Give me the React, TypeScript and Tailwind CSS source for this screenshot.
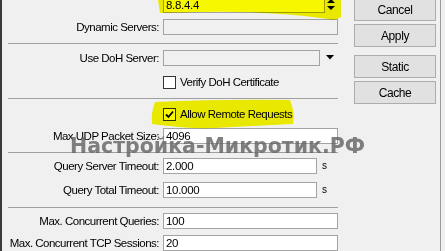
import React from "react";

function Label({ text }: { text: string }) {
  return (
    <div className="w-[158px] shrink-0 pr-[1px] text-right text-[11.5px] leading-[16px] tracking-[-0.5px] whitespace-nowrap">
      {text}
    </div>
  );
}

function Field({ w, value, bg }: { w: string; value?: string; bg: string }) {
  return (
    <div
      className={`ml-[3px] h-[16px] shrink-0 border border-[#a3a3a3] pl-[2px] text-[11.5px] leading-[14px] tracking-[-0.3px] ${w} ${bg}`}
    >
      {value}
    </div>
  );
}

function Sep({ mt }: { mt: string }) {
  return <div className={`ml-[6px] h-px w-[330px] bg-[#a0a0a0] ${mt}`} />;
}

function Check({ text, checked, mt }: { text: string; checked?: boolean; mt: string }) {
  return (
    <div className={`flex h-[13px] items-center pl-[161px] ${mt}`}>
      <div className="flex h-[13px] w-[13px] items-center justify-center border border-[#333333] bg-white">
        {checked && (
          <svg width="9" height="9" viewBox="0 0 9 9">
            <path d="M1 4.5 L3.5 7 L8 1.5" stroke="#000" strokeWidth="1.8" fill="none" />
          </svg>
        )}
      </div>
      <span className="ml-[4px] text-[11.5px] leading-[13px] tracking-[-0.5px] whitespace-nowrap">{text}</span>
    </div>
  );
}

function Btn({ text, mt }: { text: string; mt: string }) {
  return (
    <div
      className={`flex h-[23px] w-[82px] items-center justify-center border border-[#adadad] bg-[#e1e1e1] text-[12px] tracking-[-0.4px] ${mt}`}
    >
      {text}
    </div>
  );
}

export default function App() {
  return (
    <div className="relative flex h-[251px] w-[445px] overflow-hidden bg-[#f0f0f0] font-['Liberation_Sans',Arial,sans-serif] text-black">
      <div className="h-full w-[2px] shrink-0 bg-[#3a3a3a]" />
      <div className="flex w-[352px] shrink-0 flex-col">
        <div className="mt-[-3px] flex h-[16px] items-center">
          <Label text="" />
          <Field w="w-[162px]" value="8.8.4.4" bg="bg-white" />
          <svg className="ml-[2px]" width="8" height="12" viewBox="0 0 8 12">
            <path d="M0 4 L4 0 L8 4 Z M0 7 L8 7 L4 11 Z" fill="#000" />
          </svg>
        </div>
        <div className="mt-[6px] flex h-[16px] items-center">
          <Label text="Dynamic Servers:" />
          <Field w="w-[175px]" bg="bg-[#f0f0f0]" />
        </div>
        <Sep mt="mt-[8px]" />
        <div className="mt-[6px] flex h-[16px] items-center">
          <Label text="Use DoH Server:" />
          <Field w="w-[157px]" bg="bg-[#f0f0f0]" />
          <svg className="ml-[6px]" width="8" height="5" viewBox="0 0 8 5">
            <path d="M0 0 L8 0 L4 4.5 Z" fill="#000" />
          </svg>
        </div>
        <Check text="Verify DoH Certificate" mt="mt-[10px]" />
        <Sep mt="mt-[9px]" />
        <Check text="Allow Remote Requests" checked mt="mt-[10px]" />
        <div className="mt-[7px] flex h-[16px] items-center">
          <Label text="Max UDP Packet Size:" />
          <Field w="w-[175px]" value="4096" bg="bg-white" />
        </div>
        <Sep mt="mt-[8px]" />
        <div className="mt-[5px] flex h-[16px] items-center">
          <Label text="Query Server Timeout:" />
          <Field w="w-[154px]" value="2.000" bg="bg-white" />
          <span className="ml-[5px] text-[10px]">s</span>
        </div>
        <div className="mt-[8px] flex h-[16px] items-center">
          <Label text="Query Total Timeout:" />
          <Field w="w-[154px]" value="10.000" bg="bg-white" />
          <span className="ml-[5px] text-[10px]">s</span>
        </div>
        <Sep mt="mt-[9px]" />
        <div className="mt-[6px] flex h-[16px] items-center">
          <Label text="Max. Concurrent Queries:" />
          <Field w="w-[175px]" value="100" bg="bg-white" />
        </div>
        <div className="mt-[6px] flex h-[16px] items-center">
          <Label text="Max. Concurrent TCP Sessions:" />
          <Field w="w-[175px]" value="20" bg="bg-white" />
        </div>
      </div>
      <div className="flex w-[82px] shrink-0 flex-col">
        <Btn text="Cancel" mt="mt-[-2px]" />
        <Btn text="Apply" mt="mt-[3px]" />
        <Btn text="Static" mt="mt-[8px]" />
        <Btn text="Cache" mt="mt-[3px]" />
      </div>
      <div className="ml-[4px] h-full w-px bg-[#9a9a9a]" />

      {/* highlighter strokes */}
      <svg
        className="pointer-events-none absolute left-0 top-0 mix-blend-multiply"
        width="445"
        height="251"
        viewBox="0 0 445 251"
      >
        <path
          d="M158 0 L341 0 L341 17 Q336 21 328 19 Q300 15 280 14 Q240 11 200 12 L160 13 Z"
          fill="#f7f700"
        />
        <path
          d="M155 102 Q220 99 290 100 Q295 112 293 124 Q250 126 215 128 Q185 129 152 124 Q151 112 155 102 Z"
          fill="#f7f700"
        />
      </svg>

      {/* watermark */}
      <div className="pointer-events-none absolute left-[70px] top-[136px] font-['DejaVu_Sans',sans-serif] text-[20.5px] font-bold leading-[21px] whitespace-nowrap text-[rgba(100,100,100,0.82)]">
        Настройка-Микротик.РФ
      </div>
    </div>
  );
}
